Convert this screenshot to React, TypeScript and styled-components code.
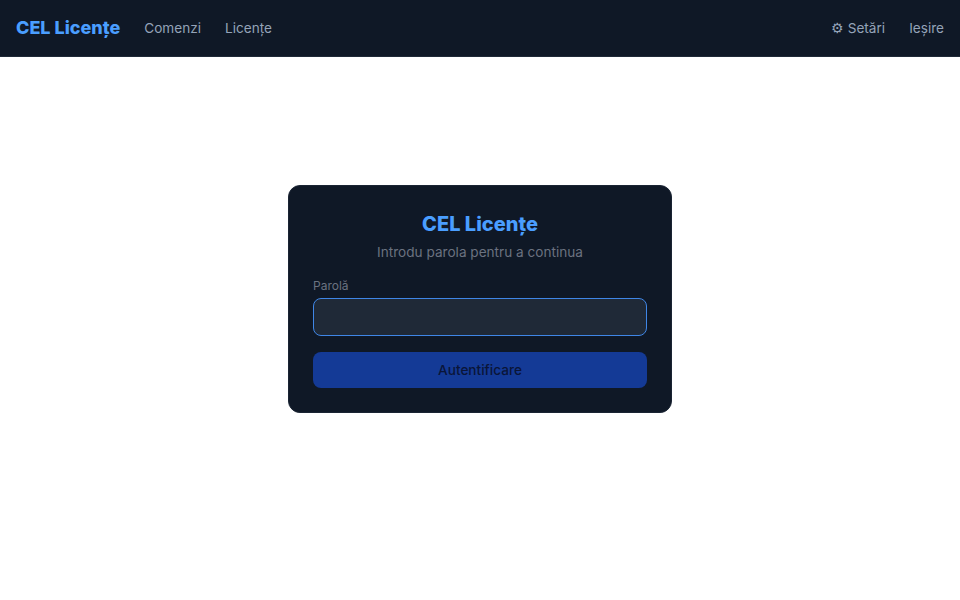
import React from "react";
import styled, { createGlobalStyle } from "styled-components";

const Global = createGlobalStyle`
  html, body { margin: 0; padding: 0; background: #fff; }
  body { font-family: Inter, "Liberation Sans", sans-serif; }
  * { box-sizing: border-box; }
`;

const Header = styled.header`
  height: 57px;
  background: #0f1826;
  border-bottom: 1px solid #1f2937;
  padding: 0 16px 1px;
  display: flex;
  align-items: center;
  justify-content: space-between;
`;
const NavGroup = styled.nav`
  display: flex;
  align-items: center;
  gap: 24px;
`;
const Brand = styled.span`
  font-size: 18px;
  font-weight: 800;
  color: #4a9eff;
`;
const NavLink = styled.a`
  font-size: 13.6px;
  color: #94a3b8;
  text-decoration: none;
`;
const Main = styled.main`
  display: flex;
  justify-content: center;
  padding-top: 128px;
`;
const Card = styled.form`
  width: 384px;
  background: #0f1826;
  border: 1px solid #1a2433;
  border-radius: 12px;
  padding: 24px;
  display: flex;
  flex-direction: column;
`;
const Title = styled.h1`
  margin: 0 0 4px;
  font-size: 20px;
  line-height: 28px;
  font-weight: 800;
  color: #4a9eff;
  text-align: center;
`;
const Subtitle = styled.p`
  margin: 0 0 16px;
  font-size: 13.6px;
  line-height: 20px;
  color: #6b7280;
  text-align: center;
`;
const Label = styled.label`
  font-size: 12px;
  line-height: 16px;
  color: #6b7280;
  margin-bottom: 4px;
`;
const Input = styled.input`
  height: 38px;
  width: 100%;
  background: #1f2937;
  border: 1px solid #3f86e6;
  border-radius: 8px;
  outline: none;
  margin-bottom: 16px;
`;
const Submit = styled.button`
  height: 36px;
  width: 100%;
  background: #143a96;
  border: none;
  border-radius: 8px;
  font-family: inherit;
  font-size: 13.6px;
  font-weight: 500;
  color: #0a1538;
`;

export default function App() {
  return (
    <>
      <Global />
      <Header>
        <NavGroup>
          <Brand>CEL Licențe</Brand>
          <NavLink>Comenzi</NavLink>
          <NavLink>Licențe</NavLink>
        </NavGroup>
        <NavGroup>
          <NavLink>⚙ Setări</NavLink>
          <NavLink>Ieșire</NavLink>
        </NavGroup>
      </Header>
      <Main>
        <Card>
          <Title>CEL Licențe</Title>
          <Subtitle>Introdu parola pentru a continua</Subtitle>
          <Label>Parolă</Label>
          <Input type="password" />
          <Submit type="button">Autentificare</Submit>
        </Card>
      </Main>
    </>
  );
}
